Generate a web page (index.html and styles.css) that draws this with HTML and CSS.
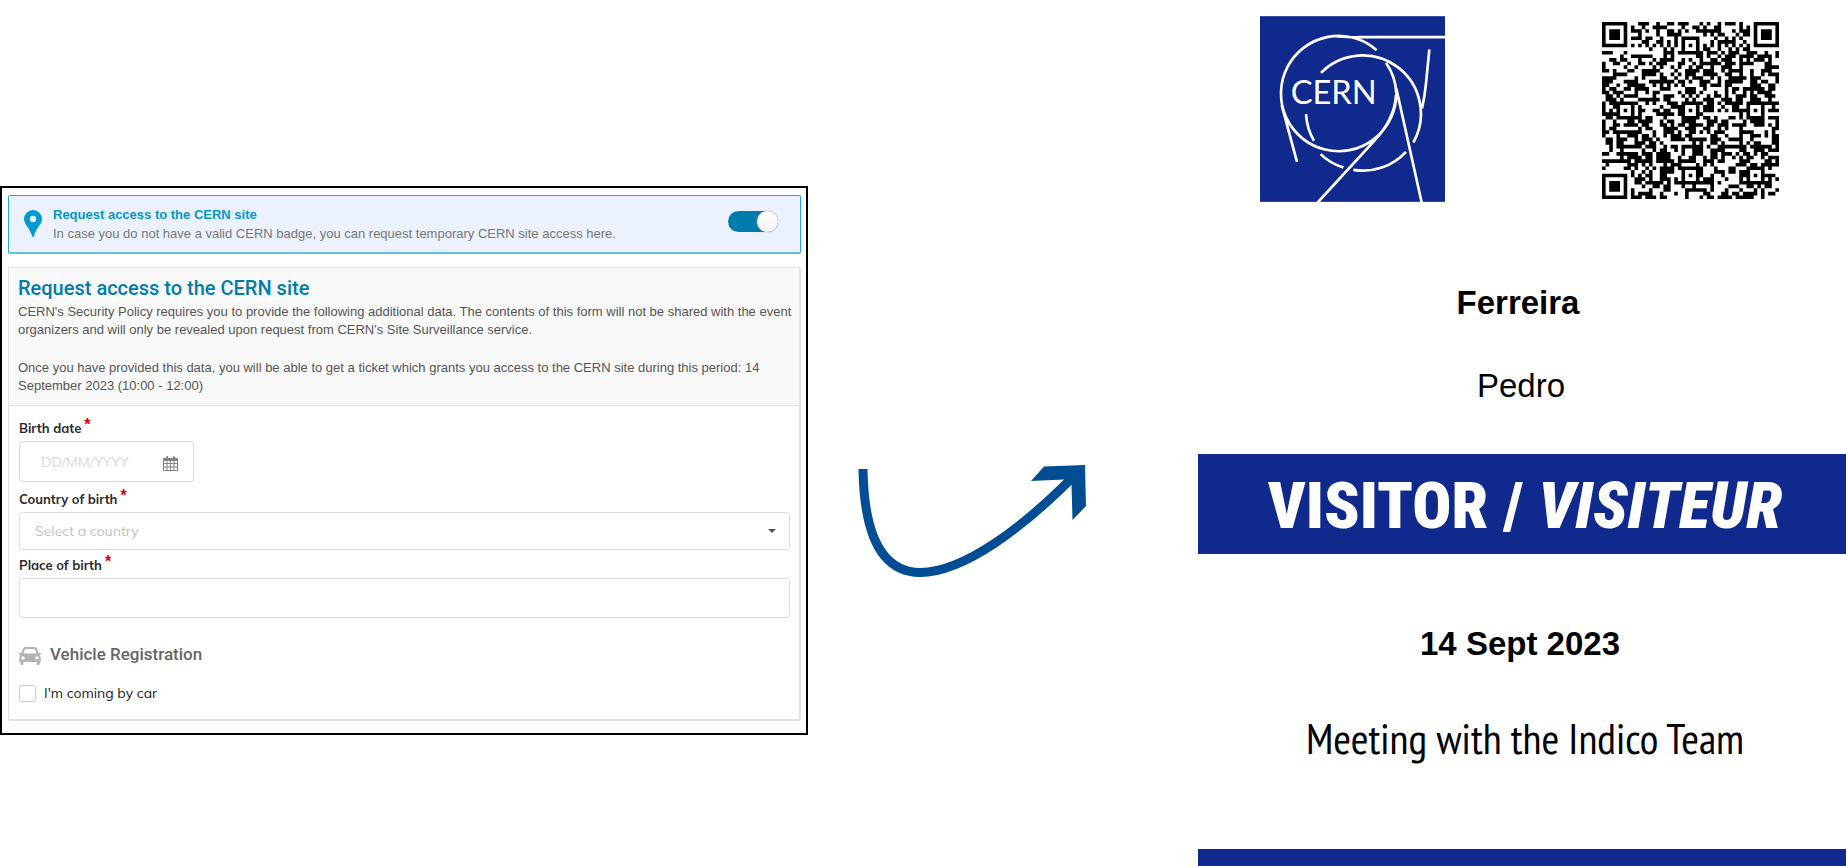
FILE: index.html
```html
<!DOCTYPE html>
<html lang="en">
<head>
<meta charset="utf-8">
<title>CERN site access</title>
<link rel="stylesheet" href="styles.css">
</head>
<body>
<main class="page">
  <form class="panel">
    <div class="notice">
      <svg class="pin" viewBox="0 0 18 28" aria-hidden="true"><path fill-rule="evenodd" d="M9 0a9 9 0 0 1 9 9c0 4-3.500 7-6 12L9 28 6 21C3.500 16 0 13 0 9a9 9 0 0 1 9-9zm0 5.800a3.200 3.200 0 1 0 0 6.400 3.200 3.200 0 0 0 0-6.400z"/></svg>
      <label class="notice-text" for="access"><strong>Request access to the CERN site</strong><span>In case you do not have a valid CERN badge, you can request temporary CERN site access here.</span></label>
      <input class="toggle" type="checkbox" id="access" checked>
    </div>
    <section class="card">
      <header class="card-head">
        <h2>Request access to the CERN site</h2>
        <p>CERN's Security Policy requires you to provide the following additional data. The contents of this form will not be shared with the event organizers and will only be revealed upon request from CERN's Site Surveillance service.</p>
        <p>Once you have provided this data, you will be able to get a ticket which grants you access to the CERN site during this period: 14 September 2023 (10:00 - 12:00)</p>
      </header>
      <div class="fields">
        <label class="label" for="birth">Birth date<sup>*</sup></label>
        <div class="date">
          <input id="birth" type="text" placeholder="DD/MM/YYYY">
          <button type="button" aria-label="Open calendar"><svg viewBox="0 0 15 15"><path fill-rule="evenodd" d="M1 2h2V1q0-1 1-1t1 1v1h5V1q0-1 1-1t1 1v1h2q1 0 1 1v11q0 1-1 1H1q-1 0-1-1V3q0-1 1-1zM1 5v2h2.500V5zm3.500 0v2H7V5zM8 5v2h2.500V5zm3.500 0v2H14V5zM1 8v2.500h2.500V8zm3.500 0v2.500H7V8zM8 8v2.500h2.500V8zm3.500 0v2.500H14V8zM1 11.500V14h2.500v-2.500zm3.500 0V14H7v-2.500zm3.500 0V14h2.500v-2.500zm3.500 0V14H14v-2.500z"/></svg></button>
        </div>
        <label class="label" for="country">Country of birth<sup>*</sup></label>
        <div class="select">
          <select id="country"><option>Select a country</option></select>
          <svg viewBox="0 0 8 4" aria-hidden="true"><path d="M0 0h8L4 4z"/></svg>
        </div>
        <label class="label" for="place">Place of birth<sup>*</sup></label>
        <input class="place" id="place" type="text">
        <h3><svg viewBox="0 0 22 18" aria-hidden="true"><path fill-rule="evenodd" d="M6.500 0h9q2 0 2.700 2l1.300 4h1.500q1 0 1 1t-1 1h-.7q1.500 1 1.500 3v4h-1v1.500q0 1.500-1.600 1.500T17.500 16.500V15h-13v1.500Q4.500 18 3 18t-1.700-1.500V15h-1v-4q0-2 1.500-3H1Q0 8 0 7t1-1h1.500l1.300-4Q4.500 0 6.500 0zM6.700 2Q6 2 5.700 2.800L4.600 6.500h12.800l-1.100-3.700Q16 2 15.300 2zM4 9.200a1.700 1.700 0 1 0 0 3.400 1.700 1.700 0 0 0 0-3.400zm14 0a1.700 1.700 0 1 0 0 3.400 1.700 1.700 0 0 0 0-3.400z"/></svg>Vehicle Registration</h3>
        <label class="check"><input type="checkbox">I'm coming by car</label>
      </div>
    </section>
  </form>

  <svg class="arrow" viewBox="0 0 260 140" aria-hidden="true"><path class="arrow-line" d="M23 19C24 85 42 122 80 122.500C125 122 184 76 231 29"/><path class="arrow-head" d="M191 31 204 16.500 245 15 246 56 232.500 70 231.500 34 224 29.500z"/></svg>

  <article class="badge">
    <div class="marks">
      <svg class="logo" viewBox="30 33 555 557" role="img" aria-label="CERN logo">
        <rect x="30" y="33" width="555" height="557"/>
        <path d="M380 135A173 173 0 1 0 439 265Q437 215 408 173M439 250 515 592M262 94Q300 97 330 96H585M213 203A175 175 0 0 1 490 412M468 440A175 175 0 0 1 310 494M280 487Q240 475 212 447M192 407Q171 372 168 327M538 133 528 235Q524 275 516 310M438 270Q434 342 372 408L203 592M95 300 141 470"/>
        <text x="122" y="298">CERN</text>
      </svg>
      <svg class="qr" id="qr" viewBox="0 0 49 49" role="img" aria-label="QR code"></svg>
    </div>
    <p class="surname">Ferreira</p>
    <p class="name">Pedro</p>
    <p class="role">VISITOR / <em>VISITEUR</em></p>
    <p class="day">14 Sept 2023</p>
    <p class="event">Meeting with the Indico Team</p>
    <div class="foot"></div>
  </article>
</main>
<script src="qr.js"></script>
</body>
</html>
```
FILE: styles.css
```css
* { box-sizing: border-box; }
body { margin: 0; background: #fff; font-family: "Liberation Sans", Arial, sans-serif; }
h2, h3, p { margin: 0; }
.page { display: grid; grid-template-columns: 808fr 390fr 648fr; align-items: start; min-height: 100vh; }

.panel { margin-top: 186px; padding: 7px 5px 12px 6px; border: 2px solid #000; font-size: 13px; }
.notice { display: flex; align-items: flex-start; height: 59px; padding: 14px 22px 0 15px; border: 1px solid #24a9d4; border-bottom: 2px solid #62c0e2; border-radius: 2px; background: #ebf2fd; }
.pin { width: 18px; height: 28px; fill: #0099cc; }
.notice-text { flex: 1; display: grid; padding-left: 11px; margin-top: -5px; line-height: 19px; color: #777; }
.notice-text strong { color: #0099cc; }
.toggle { appearance: none; width: 50px; height: 21px; margin: 1px 0 0; border-radius: 11px; background: #007caa; display: flex; justify-content: flex-end; }
.toggle::before { content: ""; width: 21px; height: 21px; border-radius: 50%; background: linear-gradient(#fff, #f2f2f2); box-shadow: 0 0 2px #aaa; }

.card { margin-top: 13px; border: 1px solid #e0e0e0; border-right: 2px solid #e2e2e2; border-bottom: 2px solid #e0e0e0; border-radius: 2px; }
.card-head { padding: 8px 0 10px 9px; background: #f9f9f9; border-bottom: 1px solid #e0e0e0; color: #555; line-height: 18px; }
.card-head h2 { font: 500 20px/24px Roboto, sans-serif; color: #007caa; margin-bottom: 3px; }
.card-head p + p { margin-top: 20px; padding-right: 24px; }
.fields { display: flex; flex-direction: column; align-items: stretch; padding: 12px 9px 17px 10px; font-family: Mulish, Nunito, Lato, sans-serif; font-size: 14px; color: #222; }
.label { height: 23px; line-height: 20px; font-weight: 700; font-size: 13px; color: #2b2b2b; }
.label sup { color: #d00; font: 700 16px/8px "Liberation Sans", sans-serif; margin-left: 3px; vertical-align: 3px; }
.date { display: flex; align-items: center; width: 175px; height: 41px; margin-bottom: 7px; border: 1px solid #dadada; border-radius: 4px; }
.date input { flex: 1; min-width: 0; border: 0; background: none; padding: 0 0 0 21px; font: 14px Mulish, Nunito, Lato, sans-serif; }
.date input::placeholder { color: #d8d8d8; }
.date button { border: 0; background: none; padding: 4px 15px 0 0; line-height: 0; }
.date svg { width: 15px; height: 15px; fill: #7c8484; }
.select { display: flex; align-items: center; height: 38px; margin-bottom: 5px; padding-right: 13px; border: 1px solid #dedede; border-radius: 4px; }
.select select { appearance: none; flex: 1; border: 0; background: none; padding: 0 0 0 15px; font: 14px Mulish, Nunito, Lato, sans-serif; color: #c2c2c2; }
.select svg { width: 8px; height: 4px; fill: #555; }
.place { height: 40px; border: 1px solid #dedede; border-radius: 4px; }
.fields h3 { display: flex; align-items: center; gap: 9px; margin-top: 24px; font: 500 17px/24px Roboto, sans-serif; color: #666; }
.fields h3 svg { width: 22px; height: 18px; margin-top: 3px; fill: #b3b3b3; }
.check { display: flex; align-items: center; gap: 8px; margin-top: 18px; line-height: 18px; }
.check input { appearance: none; width: 17px; height: 17px; margin: 0; border: 1px solid #ccc; border-radius: 3px; }

.arrow { width: 260px; margin: 450px 0 0 32px; }
.arrow-line { fill: none; stroke: #004d93; stroke-width: 9; }
.arrow-head { fill: #004d93; }

.badge { text-align: center; color: #000; font-size: 32px; line-height: 40px; }
.marks { display: flex; align-items: center; justify-content: space-between; padding: 16px 67px 0 62px; }
.logo { width: 185px; height: 186px; }
.logo rect { fill: #10298d; }
.logo path { fill: none; stroke: #fff; stroke-width: 8; }
.logo text { fill: #fff; font: 400 98px Lato, sans-serif; }
.qr { width: 177px; height: 177px; margin-top: 2px; }
.surname { margin-top: 81px; padding-right: 8px; font-weight: 700; font-size: 33px; }
.name { margin-top: 43px; padding-right: 2px; font-size: 33px; }
.role { margin-top: 48px; padding-left: 6px; height: 100px; background: #10298d; color: #fff; font: 900 65px/104px "Roboto Condensed", "Liberation Sans Narrow", sans-serif; white-space: nowrap; }
.day { margin-top: 70px; padding-right: 4px; font-weight: 700; font-size: 33px; }
.event { margin-top: 48px; padding-left: 6px; font: 400 43px/52px "PT Sans Narrow", "Roboto Condensed", sans-serif; }
.foot { margin-top: 85px; height: 17px; background: #10298d; }
```
FILE: qr.js
```js
// Version 8 symbol: 49 modules, finders in three corners, alignment marks at 6/24/42.
const size = 49;
const centres = [[24, 6], [42, 24], [24, 24], [6, 24], [24, 42], [42, 42]];
let seed = 20230914;
function bit() {
  seed = (Math.imul(seed, 1664525) + 1013904223) >>> 0;
  return (seed >>> 16) % 100 < 51;
}
function ring(x, y, cx, cy) {
  return Math.max(Math.abs(x - cx), Math.abs(y - cy));
}
function dark(x, y) {
  const random = bit();
  for (const [cx, cy] of [[3, 3], [45, 3], [3, 45]]) {
    const r = ring(x, y, cx, cy);
    if (r <= 4) return r <= 1 || r === 3;
  }
  for (const [cx, cy] of centres) {
    const r = ring(x, y, cx, cy);
    if (r <= 2) return r !== 1;
  }
  if (x === 6 || y === 6) return (x + y) % 2 === 0;
  return random;
}
let d = "";
for (let y = 0; y < size; y++) {
  for (let x = 0; x < size; x++) {
    if (dark(x, y)) d += `M${x} ${y}h1v1h-1z`;
  }
}
const path = document.createElementNS("http://www.w3.org/2000/svg", "path");
path.setAttribute("d", d);
document.getElementById("qr").append(path);
```
